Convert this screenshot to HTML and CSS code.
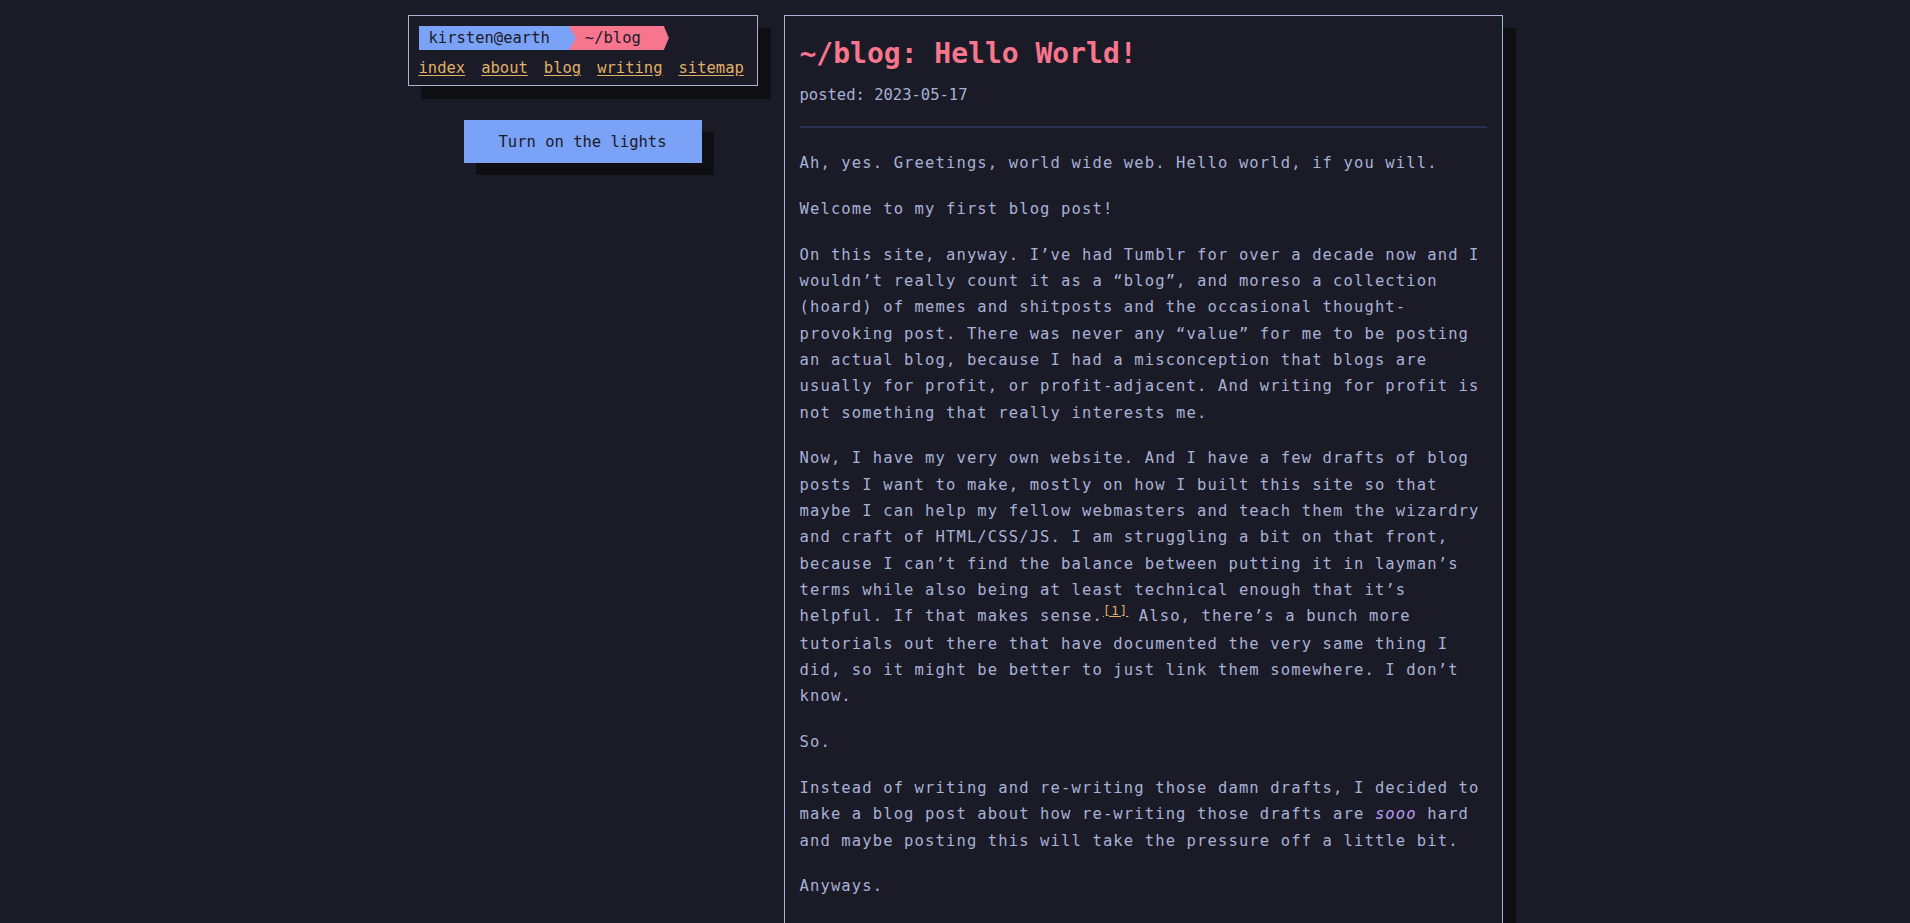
FILE: index.html
```html
<!DOCTYPE html>
<html lang="en">
<head>
<meta charset="utf-8">
<title>~/blog: Hello World!</title>
<link rel="stylesheet" href="styles.css">
</head>
<body>
<div class="page">
  <aside class="side">
    <div class="card">
      <div class="prompt">
        <span class="seg seg-user">kirsten@earth</span>
        <span class="seg seg-dir">~/blog</span>
      </div>
      <nav class="nav">
        <a href="#">index</a>
        <a href="#">about</a>
        <a href="#">blog</a>
        <a href="#">writing</a>
        <a href="#">sitemap</a>
      </nav>
    </div>
    <button class="lights" type="button">Turn on the lights</button>
  </aside>
  <main class="post">
    <h1 class="post-title">~/blog: Hello World!</h1>
    <div class="post-date">posted: 2023-05-17</div>
    <hr class="rule">
    <div class="post-body">
      <p>Ah, yes. Greetings, world wide web. Hello world, if you will.</p>
      <p>Welcome to my first blog post!</p>
      <p>On this site, anyway. I’ve had Tumblr for over a decade now and I wouldn’t really count it as a “blog”, and moreso a collection (hoard) of memes and shitposts and the occasional thought-provoking post. There was never any “value” for me to be posting an actual blog, because I had a misconception that blogs are usually for profit, or profit-adjacent. And writing for profit is not something that really interests me.</p>
      <p>Now, I have my very own website. And I have a few drafts of blog posts I want to make, mostly on how I built this site so that maybe I can help my fellow webmasters and teach them the wizardry and craft of HTML/CSS/JS. I am struggling a bit on that front, because I can’t find the balance between putting it in layman’s terms while also being at least technical enough that it’s helpful. If that makes sense.<a class="fn" href="#fn1">[1]</a> Also, there’s a bunch more tutorials out there that have documented the very same thing I did, so it might be better to just link them somewhere. I don’t know.</p>
      <p>So.</p>
      <p>Instead of writing and re-writing those damn drafts, I decided to make a blog post about how re-writing those drafts are <em class="emph">sooo</em> hard and maybe posting this will take the pressure off a little bit.</p>
      <p>Anyways.</p>
    </div>
  </main>
</div>
</body>
</html>
```
FILE: styles.css
```css
html, body {
  margin: 0;
  padding: 0;
  background: #1a1b26;
}

body {
  font-family: "DejaVu Sans Mono", "Liberation Mono", monospace;
  font-size: 15.5px;
  color: #a9b1d6;
  padding-top: 15px;
}

.page {
  width: 1095px;
  margin: 0 auto;
  display: flex;
  align-items: flex-start;
  gap: 26px;
}

.side {
  flex: 0 0 350px;
  display: flex;
  flex-direction: column;
}

.card {
  border: 1px solid #a9b1d6;
  padding: 10px 10px 5px;
  box-shadow: 13px 13px 0 #0e0e13;
}

.prompt {
  display: flex;
  height: 24px;
  line-height: 24px;
}

.seg {
  display: block;
  color: #1a1b26;
  white-space: nowrap;
}

.seg-user {
  position: relative;
  z-index: 1;
  background: #7aa2f7;
  padding: 0 26px 0 10px;
  clip-path: polygon(0 0, calc(100% - 7px) 0, 100% 50%, calc(100% - 7px) 100%, 0 100%);
}

.seg-dir {
  background: #f7768e;
  margin-left: -7px;
  padding: 0 28px 0 16px;
  clip-path: polygon(0 0, calc(100% - 5px) 0, 100% 50%, calc(100% - 5px) 100%, 0 100%);
}

.nav {
  display: flex;
  gap: 16px;
  margin-top: 6px;
  line-height: 24px;
}

.nav a {
  color: #e0af68;
  text-decoration: underline;
  text-underline-offset: 2px;
}

.lights {
  align-self: center;
  margin-top: 34px;
  width: 238px;
  height: 43px;
  border: none;
  padding: 0;
  background: #7aa2f7;
  color: #1a1b26;
  font-family: inherit;
  font-size: 15.5px;
  line-height: 24px;
  box-shadow: 12px 12px 0 #0e0e13;
  cursor: pointer;
}

.post {
  flex: 0 0 719px;
  box-sizing: border-box;
  border: 1px solid #a9b1d6;
  padding: 18px 15px 40px;
  box-shadow: 13px 13px 0 #0e0e13;
  min-height: 1000px;
}

.post-title {
  margin: 0;
  font-size: 28px;
  font-weight: bold;
  line-height: 40px;
  color: #f7768e;
}

.post-date {
  margin-top: 9px;
  line-height: 24px;
}

.rule {
  margin: 19px 0 0;
  border: none;
  height: 2px;
  background: #2b3150;
}

.post-body {
  margin-top: 22px;
  letter-spacing: 1.13px;
  line-height: 26.3px;
}

.post-body p {
  margin: 0 0 19.6px;
}

.emph {
  color: #bb9af7;
}

.fn {
  position: relative;
  top: -0.55em;
  font-size: 12.2px;
  color: #e0af68;
  text-decoration: underline;
}
```
